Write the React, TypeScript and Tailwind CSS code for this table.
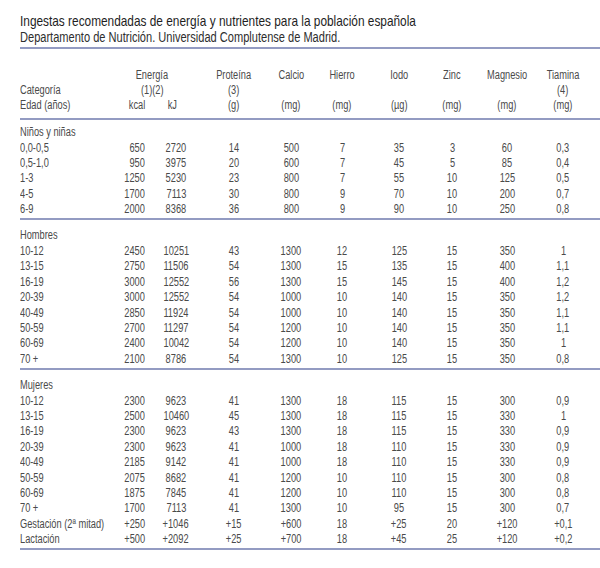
import type { ReactNode } from "react";

const cols = "grid grid-cols-[95px_30px_62px_54px_60px_42px_72px_34px_76px_36px]";

type Row = [string, string, string, string, string, string, string, string, string, string];

const ninos: Row[] = [
  ["0,0-0,5", "650", "2720", "14", "500", "7", "35", "3", "60", "0,3"],
  ["0,5-1,0", "950", "3975", "20", "600", "7", "45", "5", "85", "0,4"],
  ["1-3", "1250", "5230", "23", "800", "7", "55", "10", "125", "0,5"],
  ["4-5", "1700", "7113", "30", "800", "9", "70", "10", "200", "0,7"],
  ["6-9", "2000", "8368", "36", "800", "9", "90", "10", "250", "0,8"],
];

const hombres: Row[] = [
  ["10-12", "2450", "10251", "43", "1300", "12", "125", "15", "350", "1"],
  ["13-15", "2750", "11506", "54", "1300", "15", "135", "15", "400", "1,1"],
  ["16-19", "3000", "12552", "56", "1300", "15", "145", "15", "400", "1,2"],
  ["20-39", "3000", "12552", "54", "1000", "10", "140", "15", "350", "1,2"],
  ["40-49", "2850", "11924", "54", "1000", "10", "140", "15", "350", "1,1"],
  ["50-59", "2700", "11297", "54", "1200", "10", "140", "15", "350", "1,1"],
  ["60-69", "2400", "10042", "54", "1200", "10", "140", "15", "350", "1"],
  ["70 +", "2100", "8786", "54", "1300", "10", "125", "15", "350", "0,8"],
];

const mujeres: Row[] = [
  ["10-12", "2300", "9623", "41", "1300", "18", "115", "15", "300", "0,9"],
  ["13-15", "2500", "10460", "45", "1300", "18", "115", "15", "330", "1"],
  ["16-19", "2300", "9623", "43", "1300", "18", "115", "15", "330", "0,9"],
  ["20-39", "2300", "9623", "41", "1000", "18", "110", "15", "330", "0,9"],
  ["40-49", "2185", "9142", "41", "1000", "18", "110", "15", "330", "0,9"],
  ["50-59", "2075", "8682", "41", "1200", "10", "110", "15", "300", "0,8"],
  ["60-69", "1875", "7845", "41", "1200", "10", "110", "15", "300", "0,8"],
  ["70 +", "1700", "7113", "41", "1300", "10", "95", "15", "300", "0,7"],
  ["Gestación (2ª mitad)", "+250", "+1046", "+15", "+600", "18", "+25", "20", "+120", "+0,1"],
  ["Lactación", "+500", "+2092", "+25", "+700", "18", "+45", "25", "+120", "+0,2"],
];

// condensed look: the narrow face isn't installed, so squeeze Liberation Sans
function T({ children, origin = "origin-center", squeeze = "scale-x-[0.74]" }: { children?: ReactNode; origin?: string; squeeze?: string }) {
  return <span className={`inline-block shrink-0 whitespace-nowrap ${squeeze} ${origin}`}>{children}</span>;
}

function L({ children, squeeze }: { children?: ReactNode; squeeze?: string }) {
  return (
    <span className="flex justify-start">
      <T origin="origin-left" squeeze={squeeze}>
        {children}
      </T>
    </span>
  );
}

function R({ children }: { children?: ReactNode }) {
  return (
    <span className="flex justify-end">
      <T origin="origin-right">{children}</T>
    </span>
  );
}

function C({ children, className = "" }: { children?: ReactNode; className?: string }) {
  return (
    <span className={`flex justify-center ${className}`}>
      <T>{children}</T>
    </span>
  );
}

function Rule() {
  return <div className="ml-[20px] h-[2px] bg-[#939bc2]" />;
}

function DataRow({ row }: { row: Row }) {
  return (
    <div className={`${cols} h-[15.4px] leading-[15.4px]`}>
      <L>{row[0]}</L>
      <R>{row[1]}</R>
      {row.slice(2).map((v, i) => (
        <C key={i}>{v}</C>
      ))}
    </div>
  );
}

function Group({ label, rows, top }: { label: string; rows: Row[]; top: string }) {
  return (
    <div className={`pl-[20px] pb-[1px] ${top}`}>
      <div className="h-[15.5px] leading-[15.5px]">
        <L>{label}</L>
      </div>
      {rows.map((r) => (
        <DataRow key={r[0]} row={r} />
      ))}
    </div>
  );
}

export default function App() {
  return (
    <div className="h-[568px] w-[600px] overflow-hidden bg-white font-['Liberation_Sans',Arial,sans-serif]">
      <div className="pl-[20px] pt-[12px]">
        <h1 className="text-[15px] leading-[17px] text-[#1e1e1e]">
          <L squeeze="scale-x-[0.79]">Ingestas recomendadas de energía y nutrientes para la población española</L>
        </h1>
        <p className="text-[14px] leading-[17px] text-[#2e2e2e]">
          <L squeeze="scale-x-[0.79]">Departamento de Nutrición. Universidad Complutense de Madrid.</L>
        </p>
      </div>
      <div className="mt-[1px]">
        <Rule />
      </div>

      <div className="pl-[20px] pt-[19px] pb-[5px] text-[12.5px] text-[#4a4a4a]">
        <div className={`${cols} h-[15px] leading-[15px]`}>
          <span />
          <C className="col-span-2 pr-[18px]">Energía</C>
          <C>Proteína</C>
          <C>Calcio</C>
          <C>Hierro</C>
          <C>Iodo</C>
          <C>Zinc</C>
          <C>Magnesio</C>
          <C>Tiamina</C>
        </div>
        <div className={`${cols} h-[15px] leading-[15px]`}>
          <L>Categoría</L>
          <C className="col-span-2 pr-[18px]">(1)(2)</C>
          <C>(3)</C>
          <span />
          <span />
          <span />
          <span />
          <span />
          <C>(4)</C>
        </div>
        <div className={`${cols} h-[15px] leading-[15px]`}>
          <L>Edad (años)</L>
          <R>kcal</R>
          <C className="pr-[8px]">kJ</C>
          <C>(g)</C>
          <C>(mg)</C>
          <C>(mg)</C>
          <C>(µg)</C>
          <C>(mg)</C>
          <C>(mg)</C>
          <C>(mg)</C>
        </div>
      </div>
      <Rule />

      <div className="text-[12.5px] text-[#4a4a4a]">
        <Group label="Niños y niñas" rows={ninos} top="pt-[5px]" />
        <Rule />
        <Group label="Hombres" rows={hombres} top="pt-[8px]" />
        <Rule />
        <Group label="Mujeres" rows={mujeres} top="pt-[8px]" />
        <Rule />
      </div>
    </div>
  );
}
